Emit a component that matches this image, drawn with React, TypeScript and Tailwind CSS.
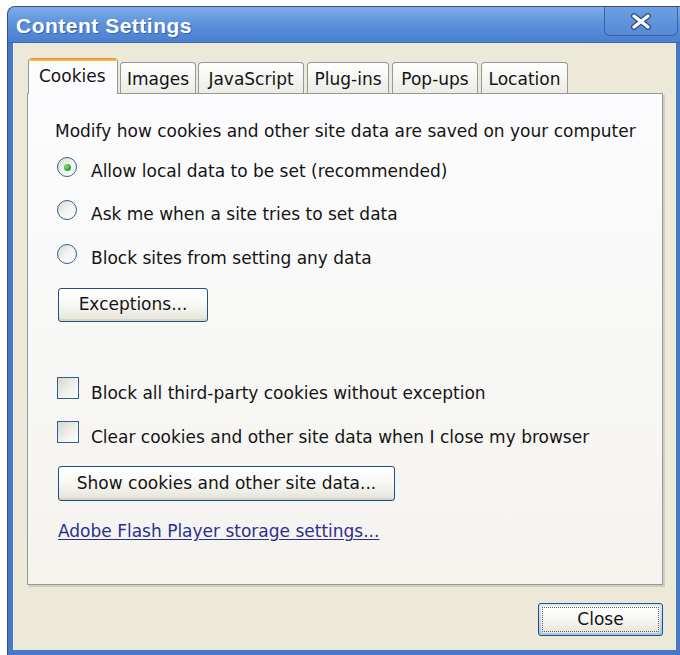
import React from 'react';

const ui = "font-['DejaVu_Sans',sans-serif] text-[17px] text-[#141414]";

const tabs = [
  { label: 'Cookies', w: 'w-[90px]', ml: 'ml-0', active: true },
  { label: 'Images', w: 'w-[76px]', ml: 'ml-[2px]', active: false },
  { label: 'JavaScript', w: 'w-[106px]', ml: 'ml-[2px]', active: false },
  { label: 'Plug-ins', w: 'w-[82px]', ml: 'ml-[3px]', active: false },
  { label: 'Pop-ups', w: 'w-[86px]', ml: 'ml-[3px]', active: false },
  { label: 'Location', w: 'w-[87px]', ml: 'ml-[3px]', active: false },
];

const Radio: React.FC<{ checked?: boolean }> = ({ checked }) => (
  <span className="flex h-[20px] w-[20px] shrink-0 items-center justify-center rounded-full border border-[#2f5f96] bg-gradient-to-br from-[#d9d9d2] via-[#f4f4f0] to-white">
    {checked && (
      <span className="h-[7px] w-[7px] rounded-full bg-[radial-gradient(circle_at_35%_35%,#7fe07f,#1f9e1f_70%)]" />
    )}
  </span>
);

const Checkbox: React.FC = () => (
  <span className="block h-[22px] w-[22px] shrink-0 border border-[#2f5f96] bg-gradient-to-br from-[#d6d6cf] via-[#eeeee9] to-white" />
);

const XpButton: React.FC<{ className?: string; children: React.ReactNode }> = ({ className = '', children }) => (
  <button
    className={`flex items-center justify-center rounded-[3px] border border-[#1f4f86] bg-gradient-to-b from-white via-[#f7f7f4] to-[#e4e2d8] shadow-[inset_0_-2px_0_#d8d4c6] ${className}`}
  >
    {children}
  </button>
);

export default function App() {
  return (
    <div className="h-[655px] w-[680px] overflow-hidden bg-white pl-[7px] pt-[6px]">
      <div className="flex h-[660px] w-[673px] flex-col overflow-hidden rounded-tl-[8px] border-l border-t border-[#3b4f78] bg-[#4677c8]">
        {/* title bar */}
        <div className="flex h-[36px] shrink-0 items-start justify-between border-b border-[#3a67b6] bg-gradient-to-b from-[#7eacea] via-[#5b90da] to-[#4a80d0] pl-[8px]">
          <span className="mt-[7px] font-['Liberation_Sans',sans-serif] text-[21px] font-bold leading-[24px] tracking-[0.5px] text-white [text-shadow:1px_1px_0_#3563ad]">
            Content Settings
          </span>
          <div className="mr-[2px] flex h-[29px] w-[74px] items-center justify-center rounded-b-[6px] border border-t-0 border-[#3862ae] bg-gradient-to-b from-[#6e9fe2] to-[#5689d6]">
            <svg width="22" height="17" viewBox="0 0 22 17" className="mt-[1px]">
              <path d="M4 3 L18 14 M18 3 L4 14" stroke="#2e4d86" strokeWidth="6" strokeLinecap="round" />
              <path d="M4 3 L18 14 M18 3 L4 14" stroke="#ffffff" strokeWidth="3.4" strokeLinecap="round" />
            </svg>
          </div>
        </div>

        {/* window body */}
        <div className="flex flex-1">
          <div className="w-[5px] shrink-0 bg-[#4677c8]" />
          <div className="flex h-[607px] w-[663px] shrink-0 flex-col border-l border-[#f5f3ea] bg-[#ece9d8] pl-[13px] pt-[15px]">
            {/* tabs */}
            <div className={`flex h-[35px] items-end pl-[1px] ${ui}`}>
              {tabs.map((t) =>
                t.active ? (
                  <div
                    key={t.label}
                    className={`relative z-10 -mb-[1px] flex h-[36px] ${t.w} ${t.ml} flex-col overflow-hidden rounded-t-[4px] border-x border-[#919b9c] bg-[#fcfcfe]`}
                  >
                    <div className="h-[3px] bg-gradient-to-b from-[#e68b2c] to-[#ffc73c]" />
                    <span className="pl-[10px] pt-[5px] leading-[20px]">{t.label}</span>
                  </div>
                ) : (
                  <div
                    key={t.label}
                    className={`flex h-[31px] ${t.w} ${t.ml} items-start justify-center rounded-t-[4px] border border-b-0 border-[#919b9c] bg-gradient-to-b from-white to-[#ecebe4] pt-[6px] leading-[20px]`}
                  >
                    {t.label}
                  </div>
                ),
              )}
            </div>

            {/* tab page */}
            <div
              className={`flex h-[492px] w-[636px] flex-col border border-[#919b9c] bg-gradient-to-b from-[#fcfcfe] to-[#f4f3ee] pl-[29px] pt-[27px] shadow-[2px_2px_0_#d0cdbd] ${ui}`}
            >
              <p className="-ml-[2px] leading-[20px]">
                Modify how cookies and other site data are saved on your computer
              </p>

              <label className="mt-[16px] flex h-[24px] items-start gap-[14px]">
                <Radio checked />
                <span className="mt-[4px] leading-[20px]">Allow local data to be set (recommended)</span>
              </label>
              <label className="mt-[19px] flex h-[24px] items-start gap-[14px]">
                <Radio />
                <span className="mt-[4px] leading-[20px]">Ask me when a site tries to set data</span>
              </label>
              <label className="mt-[20px] flex h-[24px] items-start gap-[14px]">
                <Radio />
                <span className="mt-[4px] leading-[20px]">Block sites from setting any data</span>
              </label>

              <XpButton className="ml-[1px] mt-[20px] h-[34px] w-[150px]">Exceptions...</XpButton>

              <label className="mt-[55px] flex h-[26px] items-start gap-[12px]">
                <Checkbox />
                <span className="mt-[6px] leading-[20px]">Block all third-party cookies without exception</span>
              </label>
              <label className="mt-[18px] flex h-[26px] items-start gap-[12px]">
                <Checkbox />
                <span className="mt-[6px] leading-[20px]">
                  Clear cookies and other site data when I close my browser
                </span>
              </label>

              <XpButton className="ml-[1px] mt-[19px] h-[35px] w-[337px]">Show cookies and other site data...</XpButton>

              <a className="ml-[1px] mt-[20px] w-fit leading-[20px] text-[#2d2f8f] underline underline-offset-[2px]">
                Adobe Flash Player storage settings...
              </a>
            </div>

            {/* dialog buttons */}
            <div className="mt-[18px] flex w-[636px] justify-end">
              <button
                className={`flex h-[33px] w-[125px] items-center justify-center rounded-[3px] border border-[#1f4f86] bg-gradient-to-b from-[#dce8fb] to-[#a9c2ef] p-[2px] ${ui}`}
              >
                <span className="flex h-full w-full items-center justify-center rounded-[2px] bg-gradient-to-b from-white via-[#f7f7f4] to-[#e6e4da] p-[1px]">
                  <span className="flex h-full w-full items-center justify-center border border-dotted border-[#6b5a3c]">
                    Close
                  </span>
                </span>
              </button>
            </div>
          </div>
          <div className="w-[4px] shrink-0 bg-[#4677c8]" />
        </div>
      </div>
    </div>
  );
}
